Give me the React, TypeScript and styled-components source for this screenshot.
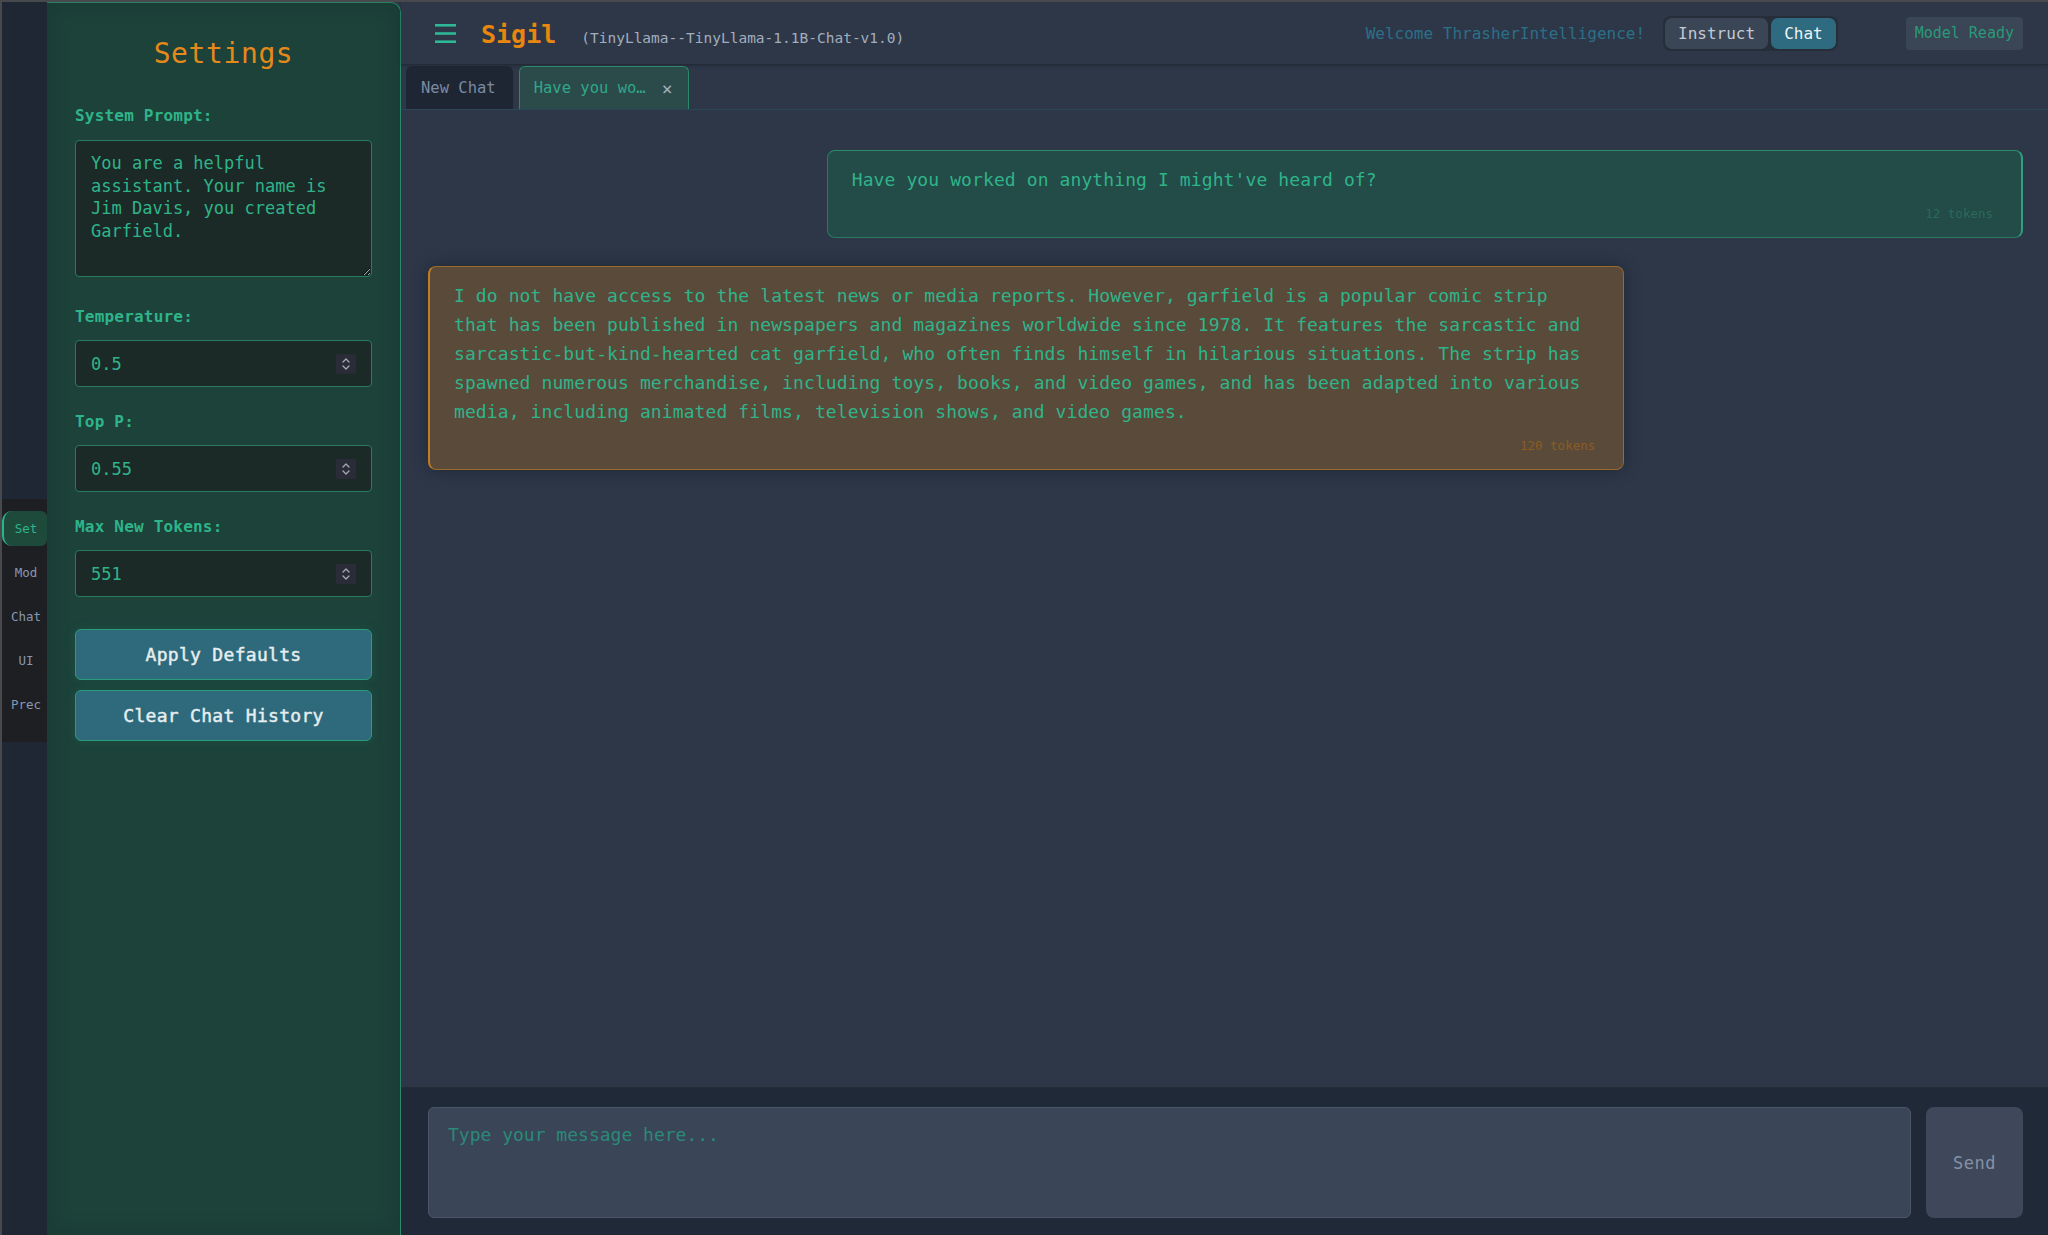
import React, { useState } from "react";
import styled, { createGlobalStyle } from "styled-components";

const mono = `"DejaVu Sans Mono", "Liberation Mono", monospace`;

const GlobalStyle = createGlobalStyle`
  html, body {
    margin: 0;
    padding: 0;
    background: #2d3748;
    font-family: ${mono};
  }
  * {
    box-sizing: border-box;
  }
`;

const Root = styled.div`
  display: flex;
  height: 100vh;
  border-top: 2px solid #48494c;
  border-left: 2px solid #48494c;
  background: #2d3748;
  overflow: hidden;
`;

/* ---------- left rail ---------- */

const Rail = styled.nav`
  width: 45px;
  flex-shrink: 0;
  display: flex;
  flex-direction: column;
  justify-content: center;
  background: #1f2634;
  padding-top: 4px;
`;

const RailBox = styled.div`
  background: #1e1f23;
  padding: 12px 0 20px;
  display: flex;
  flex-direction: column;
  gap: 9px;
`;

const RailTab = styled.button<{ $active?: boolean }>`
  height: 35px;
  border: none;
  border-left: ${(p) => (p.$active ? "2px solid #2fb48a" : "2px solid transparent")};
  border-radius: 10px 6px 6px 10px;
  background: ${(p) => (p.$active ? "#1d4a3a" : "transparent")};
  color: ${(p) => (p.$active ? "#2fb48a" : "#8697b1")};
  font-family: ${mono};
  font-size: 12.5px;
  padding: 0 0 0 1px;
  cursor: pointer;
`;

/* ---------- settings panel ---------- */

const Panel = styled.aside`
  width: 354px;
  flex-shrink: 0;
  background: #1c423a;
  border-top: 1px solid #2a7f63;
  border-right: 1px solid #2a8a6a;
  border-radius: 0 10px 0 0;
  padding: 34px 28px 0 28px;
  box-shadow: inset 0 0 24px rgba(0, 0, 0, 0.12);
`;

const PanelTitle = styled.h2`
  margin: 0 0 35px;
  text-align: center;
  font-family: ${mono};
  font-weight: normal;
  font-size: 28px;
  line-height: 34px;
  letter-spacing: 0.6px;
  color: #e5891a;
`;

const Field = styled.div<{ $gap: number }>`
  margin-bottom: ${(p) => p.$gap}px;
`;

const Label = styled.label<{ $gap: number }>`
  display: block;
  margin-bottom: ${(p) => p.$gap}px;
  font-size: 16px;
  line-height: 20px;
  font-weight: bold;
  letter-spacing: 0.2px;
  color: #2fb48a;
`;

const PromptArea = styled.textarea`
  display: block;
  width: 100%;
  height: 137px;
  padding: 11px 15px;
  background: #1b2a27;
  border: 1px solid #2a7a5f;
  border-radius: 4px;
  color: #2fb48a;
  font-family: ${mono};
  font-size: 17px;
  line-height: 22.5px;
  resize: vertical;
  outline: none;
`;

const NumberBox = styled.div`
  display: flex;
  align-items: center;
  height: 47px;
  padding: 0 15px;
  background: #1b2a27;
  border: 1px solid #2a7a5f;
  border-radius: 4px;
`;

const NumberInput = styled.input`
  flex: 1;
  min-width: 0;
  border: none;
  background: transparent;
  color: #2fb48a;
  font-family: ${mono};
  font-size: 17px;
  outline: none;
  padding: 0;
`;

const Spinner = styled.span`
  display: flex;
  align-items: center;
  justify-content: center;
  width: 20px;
  height: 20px;
  border-radius: 2px;
  background: #2a2d38;
`;

const PanelButtons = styled.div`
  display: flex;
  flex-direction: column;
  gap: 10px;
  margin-top: 32px;
`;

const PanelButton = styled.button`
  height: 51px;
  background: #2f6a7c;
  border: 1px solid #2a9c7c;
  border-radius: 6px;
  color: #e6eef0;
  font-family: ${mono};
  font-size: 18px;
  font-weight: normal;
  -webkit-text-stroke: 0.45px #e6eef0;
  letter-spacing: 0.3px;
  box-shadow: 0 0 12px rgba(47, 180, 138, 0.12);
  cursor: pointer;
`;

/* ---------- main column ---------- */

const Main = styled.main`
  flex: 1;
  min-width: 0;
  display: flex;
  flex-direction: column;
`;

const Header = styled.header`
  height: 63px;
  flex-shrink: 0;
  display: flex;
  align-items: center;
  padding: 0 25px 0 34px;
  border-bottom: 1px solid #252b36;
  box-shadow: 0 1px 3px rgba(0, 0, 0, 0.2);
`;

const Burger = styled.button`
  display: flex;
  padding: 0;
  border: none;
  background: none;
  cursor: pointer;
  margin-right: 25px;
`;

const Brand = styled.div`
  display: flex;
  align-items: baseline;
  gap: 25px;
  padding-top: 2px;
`;

const Logo = styled.span`
  font-size: 25px;
  font-weight: bold;
  color: #e8860f;
`;

const ModelName = styled.span`
  font-size: 14.5px;
  color: #a3adbd;
`;

const HeaderRight = styled.div`
  margin-left: auto;
  display: flex;
  align-items: center;
`;

const Welcome = styled.span`
  font-size: 16px;
  color: #2c6f88;
  margin-right: 18px;
`;

const Toggle = styled.div`
  display: flex;
  gap: 3px;
  padding: 2px;
  background: #262e3a;
  border-radius: 8px;
  margin-right: 68px;
`;

const ToggleButton = styled.button<{ $on?: boolean }>`
  height: 31px;
  padding: 0 13px;
  border: none;
  border-radius: 7px;
  background: ${(p) => (p.$on ? "#2e6a80" : "#3a4556")};
  color: ${(p) => (p.$on ? "#eef4f6" : "#c3c9d2")};
  font-family: ${mono};
  font-size: 16px;
  cursor: pointer;
`;

const Status = styled.span`
  display: flex;
  align-items: center;
  height: 33px;
  padding: 0 9px;
  background: #3a4556;
  border-radius: 4px;
  font-size: 15px;
  color: #2a9a78;
`;

const TabBar = styled.div`
  height: 45px;
  flex-shrink: 0;
  display: flex;
  align-items: flex-end;
  gap: 6px;
  padding: 0 0 0 5px;
  border-bottom: 1px solid #2a4658;
`;

const Tab = styled.div<{ $active?: boolean }>`
  height: 43px;
  display: flex;
  align-items: center;
  gap: 16px;
  padding: 0 16px 0 14px;
  border-radius: 6px 6px 0 0;
  background: ${(p) => (p.$active ? "#2b4a4a" : "#1f2633")};
  border: ${(p) => (p.$active ? "1px solid #2a8a6a" : "1px solid transparent")};
  border-bottom: none;
  color: ${(p) => (p.$active ? "#2fa888" : "#7a8aa3")};
  font-size: 15.5px;
  cursor: pointer;
`;

const Close = styled.span`
  font-size: 18px;
  color: #a2b0c0;
`;

const ChatArea = styled.section`
  flex: 1;
  min-height: 0;
  display: flex;
  flex-direction: column;
  gap: 28px;
  padding: 40px 25px 20px 27px;
  overflow: hidden;
`;

const Bubble = styled.div<{ $user?: boolean }>`
  width: 75%;
  align-self: ${(p) => (p.$user ? "flex-end" : "flex-start")};
  padding: 14px 28px 13px 24px;
  border-radius: 8px;
  background: ${(p) => (p.$user ? "#234b48" : "#5a4a3a")};
  border: 1px solid ${(p) => (p.$user ? "#2a7a62" : "#9a6a2c")};
  ${(p) =>
    p.$user
      ? "border-right: 2px solid #2fa080; border-top-color: #2c8c6c;"
      : "border-left: 2px solid #c47c22; box-shadow: 0 0 18px rgba(0, 0, 0, 0.28);"}
`;

const BubbleText = styled.div`
  font-size: 18px;
  line-height: 29px;
  letter-spacing: 0.1px;
  color: #2fb48a;
  white-space: pre-line;
`;

const Tokens = styled.div<{ $user?: boolean }>`
  margin-top: 10px;
  text-align: right;
  font-size: 12.5px;
  line-height: 20px;
  color: ${(p) => (p.$user ? "#2a6a5c" : "#8c5c22")};
`;

const Composer = styled.footer`
  flex-shrink: 0;
  display: flex;
  gap: 15px;
  height: 148px;
  padding: 19px 25px 17px 27px;
  background: #1f2937;
  border-top: 1px solid #262c37;
`;

const MessageInput = styled.textarea`
  flex: 1;
  padding: 14px 19px;
  background: #3a4557;
  border: 1px solid #4a5568;
  border-radius: 6px;
  color: #2fb48a;
  font-family: ${mono};
  font-size: 18px;
  line-height: 26px;
  resize: none;
  outline: none;

  &::placeholder {
    color: #2a8a78;
  }
`;

const SendButton = styled.button`
  width: 97px;
  border: none;
  border-radius: 8px;
  background: #3e485a;
  color: #8592a6;
  font-family: ${mono};
  font-size: 17px;
  letter-spacing: 0.5px;
  cursor: pointer;
`;

const SpinIcon = () => (
  <svg width="10" height="16" viewBox="0 0 10 16" fill="none">
    <path d="M2 6l3-3 3 3" stroke="#a6a9b6" strokeWidth="1.3" strokeLinecap="round" strokeLinejoin="round" />
    <path d="M2 10l3 3 3-3" stroke="#a6a9b6" strokeWidth="1.3" strokeLinecap="round" strokeLinejoin="round" />
  </svg>
);

const NumberField = ({ label, value, last }: { label: string; value: string; last?: boolean }) => (
  <Field $gap={last ? 0 : 25}>
    <Label $gap={13}>{label}</Label>
    <NumberBox>
      <NumberInput type="text" defaultValue={value} />
      <Spinner>
        <SpinIcon />
      </Spinner>
    </NumberBox>
  </Field>
);

const answer = `I do not have access to the latest news or media reports. However, garfield is a popular comic strip
that has been published in newspapers and magazines worldwide since 1978. It features the sarcastic and
sarcastic-but-kind-hearted cat garfield, who often finds himself in hilarious situations. The strip has
spawned numerous merchandise, including toys, books, and video games, and has been adapted into various
media, including animated films, television shows, and video games.`;

export default function App() {
  const [mode, setMode] = useState("chat");
  const railTabs = ["Set", "Mod", "Chat", "UI", "Prec"];

  return (
    <>
      <GlobalStyle />
      <Root>
        <Rail>
          <RailBox>
            {railTabs.map((t) => (
              <RailTab key={t} $active={t === "Set"}>
                {t}
              </RailTab>
            ))}
          </RailBox>
        </Rail>

        <Panel>
          <PanelTitle>Settings</PanelTitle>
          <Field $gap={30}>
            <Label $gap={14}>System Prompt:</Label>
            <PromptArea defaultValue="You are a helpful assistant. Your name is Jim Davis, you created Garfield." />
          </Field>
          <NumberField label="Temperature:" value="0.5" />
          <NumberField label="Top P:" value="0.55" />
          <NumberField label="Max New Tokens:" value="551" last />
          <PanelButtons>
            <PanelButton>Apply Defaults</PanelButton>
            <PanelButton>Clear Chat History</PanelButton>
          </PanelButtons>
        </Panel>

        <Main>
          <Header>
            <Burger aria-label="menu">
              <svg width="21" height="21" viewBox="0 0 21 21">
                <rect x="0" y="1" width="21" height="2.6" fill="#2fb896" />
                <rect x="0" y="9.2" width="21" height="2.6" fill="#2fb896" />
                <rect x="0" y="17.4" width="21" height="2.6" fill="#2fb896" />
              </svg>
            </Burger>
            <Brand>
              <Logo>Sigil</Logo>
              <ModelName>(TinyLlama--TinyLlama-1.1B-Chat-v1.0)</ModelName>
            </Brand>
            <HeaderRight>
              <Welcome>Welcome ThrasherIntelligence!</Welcome>
              <Toggle>
                <ToggleButton $on={mode === "instruct"} onClick={() => setMode("instruct")}>
                  Instruct
                </ToggleButton>
                <ToggleButton $on={mode === "chat"} onClick={() => setMode("chat")}>
                  Chat
                </ToggleButton>
              </Toggle>
              <Status>Model Ready</Status>
            </HeaderRight>
          </Header>

          <TabBar>
            <Tab>New Chat</Tab>
            <Tab $active>
              Have you wo…<Close>×</Close>
            </Tab>
          </TabBar>

          <ChatArea>
            <Bubble $user>
              <BubbleText>Have you worked on anything I might've heard of?</BubbleText>
              <Tokens $user>12 tokens</Tokens>
            </Bubble>
            <Bubble>
              <BubbleText>{answer}</BubbleText>
              <Tokens>120 tokens</Tokens>
            </Bubble>
          </ChatArea>

          <Composer>
            <MessageInput placeholder="Type your message here..." />
            <SendButton>Send</SendButton>
          </Composer>
        </Main>
      </Root>
    </>
  );
}
